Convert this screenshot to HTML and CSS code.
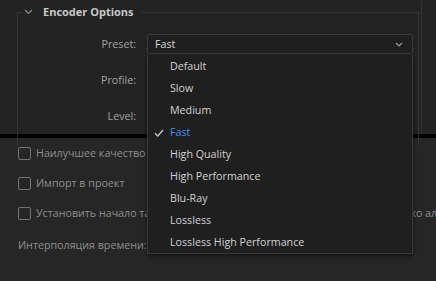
FILE: index.html
```html
<!DOCTYPE html>
<html>
    <head>
        <meta charset="utf-8" />
        <title>Encoder Options</title>
        <link rel="stylesheet" href="styles.css">
    </head>
    <body>
        <div class="top">
            <div class="scroll">
                <fieldset class="group">
                    <legend>
                        <svg class="twisty" width="9" height="6" viewBox="0 0 9 6"><path d="M1 1 L4.5 4.5 L8 1" fill="none" stroke="#8a8a8a" stroke-width="1.2"/></svg>
                        <span>Encoder Options</span>
                    </legend>
                    <div class="row">
                        <label>Preset:</label>
                        <div class="select">
                            <span>Fast</span>
                            <svg width="8" height="5" viewBox="0 0 8 5"><path d="M1 1 L4 4 L7 1" fill="none" stroke="#9a9a9a" stroke-width="1.2"/></svg>
                        </div>
                    </div>
                    <div class="row">
                        <label>Profile:</label>
                    </div>
                    <div class="row">
                        <label>Level:</label>
                    </div>
                </fieldset>
            </div>
        </div>
        <div class="divider"></div>
        <div class="bottom">
            <div class="check"><span class="box"></span>Наилучшее качество визуализации</div>
            <div class="check"><span class="box"></span>Импорт в проект</div>
            <div class="check">
                <span class="box"></span>Установить начало таймкода
                <span class="tc">00:00:00:00</span>
                <span class="box alpha"></span>Визуализировать только альфа-канал
            </div>
            <div class="field">Интерполяция времени:</div>
        </div>
        <ul class="menu">
            <li>Default</li>
            <li>Slow</li>
            <li>Medium</li>
            <li class="on"><svg class="tick" width="10" height="8" viewBox="0 0 10 8"><path d="M1 4.2 L3.8 7 L9 1" fill="none" stroke="#c4c4c4" stroke-width="1.4"/></svg>Fast</li>
            <li>High Quality</li>
            <li>High Performance</li>
            <li>Blu-Ray</li>
            <li>Lossless</li>
            <li>Lossless High Performance</li>
        </ul>
    </body>
</html>
```

FILE: styles.css
```css
html, body {
    margin:     0;
    width:      436px;
    height:     281px;
    overflow:   hidden;
    background: #262626;
    font-family: "Open Sans", "Noto Sans", sans-serif;
    font-size:  10.7px;
}
body {
    position:   relative;
}

.top {
    height:     134px;
    background: #232323;
    display:    flex;
}
.scroll {
    width:      422px;
    border-right: 1px solid #303030;
    padding:    5px 0 0 17px;
    box-sizing: border-box;
}
fieldset.group {
    margin:     0;
    padding:    0;
    width:      402px;
    height:     140px;
    box-sizing: border-box;
    border:     1px solid #343434;
    border-bottom: none;
}
fieldset.group legend {
    margin-left: 4px;
    padding:    0 7px 0 2px;
    display:    flex;
    align-items: center;
    gap:        10px;
    color:      #c8c8c8;
    font-weight: bold;
    font-size:  11px;
    line-height: 14px;
}
.twisty {
    margin-top: -1px;
}

.row {
    height:     36px;
    display:    flex;
    align-items: flex-start;
}
.row:first-of-type {
    margin-top: 15px;
}
.row label {
    width:      118px;
    text-align: right;
    color:      #a2a2a2;
    line-height: 20px;
}
.select {
    margin-left: 11px;
    width:      266px;
    height:     20px;
    box-sizing: border-box;
    border:     1px solid #3a3a3a;
    border-radius: 3px;
    background: #1f1f1f;
    display:    flex;
    align-items: center;
    justify-content: space-between;
    padding:    0 9px 0 7px;
    color:      #d6d6d6;
}

.divider {
    height:     4px;
    background: #000000;
}

.bottom {
    padding:    9px 0 0 18px;
    color:      #8e8e8e;
    white-space: nowrap;
}
.check {
    height:     30px;
    display:    flex;
    align-items: flex-start;
    gap:        5px;
    line-height: 13px;
}
.box {
    width:      13px;
    height:     13px;
    box-sizing: border-box;
    border:     1.5px solid #747474;
    border-radius: 2px;
    flex:       none;
}
.tc {
    margin-left: 8px;
    color:      #3f90ea;
}
.box.alpha {
    margin-left: 10px;
}
.field {
    margin-top: 1px;
}

.menu {
    position:   absolute;
    left:       147px;
    top:        55px;
    width:      266px;
    margin:     0;
    padding:    0;
    list-style: none;
    box-sizing: border-box;
    background: #1f1f1f;
    border:     1px solid #383838;
    border-top: none;
    box-shadow: 0 2px 4px rgba(0, 0, 0, 0.5);
}
.menu li {
    height:     22px;
    line-height: 22px;
    padding-left: 22px;
    color:      #d2d2d2;
    position:   relative;
}
.menu li.on {
    color:      #3f90ea;
}
.tick {
    position:   absolute;
    left:       6px;
    top:        8px;
}
```
